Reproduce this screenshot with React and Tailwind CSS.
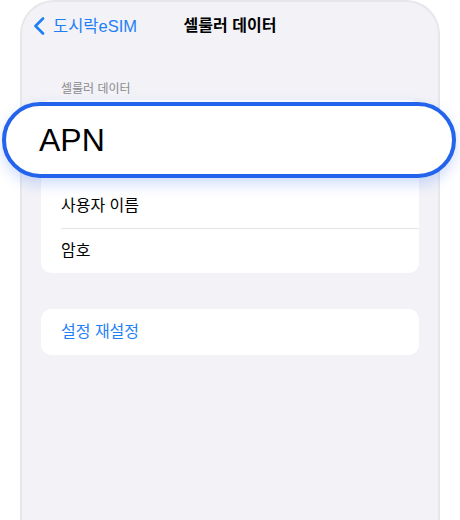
import React from 'react';

const font = { fontFamily: '"Liberation Sans", "Noto Sans CJK KR", sans-serif' };

function BackChevron() {
    return (
        <svg width="12" height="18" viewBox="0 0 12 18" fill="none">
            <path d="M10 1.5 L2.5 9 L10 16.5" stroke="#1f7ff5" strokeWidth="2.6" strokeLinecap="round" strokeLinejoin="round" />
        </svg>
    );
}

export default function App() {
    return (
        <div className="relative w-[460px] h-[520px] bg-white overflow-hidden" style={font}>
            <div className="mx-[20px] h-full border-2 border-b-0 border-[#e7e7ea] rounded-t-[34px] bg-[#f2f2f7]">
                {/* nav bar */}
                <div className="grid grid-cols-[1fr_auto_1fr] items-center h-[48px]">
                    <div className="flex items-center gap-[8px] pl-[11px] text-[16.5px] text-[#1f7ff5]">
                        <BackChevron />
                        <span>도시락eSIM</span>
                    </div>
                    <div className="text-[16px] font-bold text-black">셀룰러 데이터</div>
                    <div />
                </div>

                <div className="px-[19px]">
                    <div className="pt-[31px] pb-[3px] px-[20px] text-[12px] leading-[16px] text-[#8a8a8e]">셀룰러 데이터</div>

                    <div className="rounded-[10px] bg-white">
                        {/* APN row sits under the enlarged field */}
                        <div className="h-[83px]" />
                        <div className="h-[45px] flex items-center px-[20px] text-[16px] text-black">사용자 이름</div>
                        <div className="pl-[20px]">
                            <div className="h-[45px] flex items-center border-t border-[#e4e4e7] text-[16px] text-black">암호</div>
                        </div>
                    </div>

                    <div className="mt-[36px] h-[46px] rounded-[10px] bg-white flex items-center px-[20px] text-[16px] text-[#1f7ff5]">
                        설정 재설정
                    </div>
                </div>
            </div>

            {/* enlarged APN field */}
            <div className="absolute left-[2px] top-[102px] w-[454px] h-[76px] rounded-full border-4 border-[#2463eb] bg-white shadow-[0_6px_14px_rgba(37,99,235,0.22)] flex items-center pl-[33px] text-[32px] text-black">
                APN
            </div>
        </div>
    );
}
